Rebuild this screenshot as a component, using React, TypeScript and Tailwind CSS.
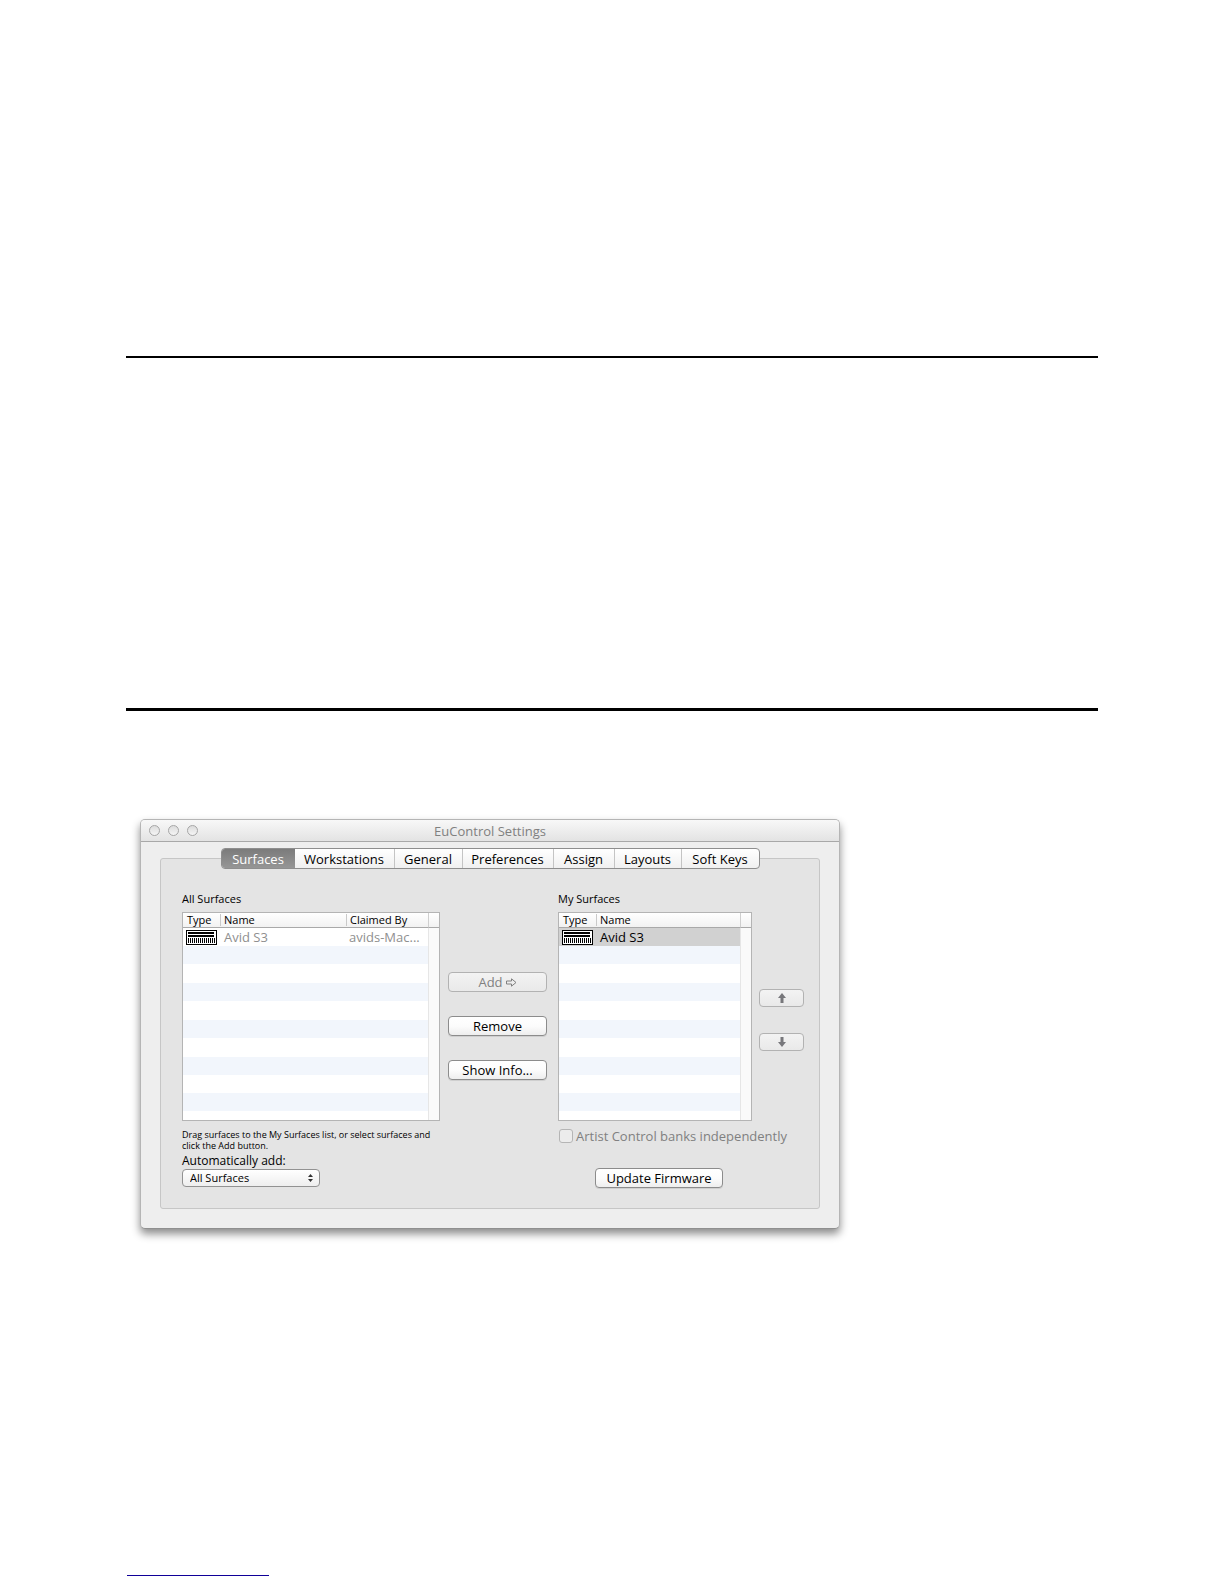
import { clsx } from "clsx";

const tabs = [
  { label: "Surfaces", width: "w-[73px]" },
  { label: "Workstations", width: "w-[99px]" },
  { label: "General", width: "w-[68px]" },
  { label: "Preferences", width: "w-[91px]" },
  { label: "Assign", width: "w-[61px]" },
  { label: "Layouts", width: "w-[67px]" },
  { label: "Soft Keys", width: "w-[78px]" },
];

const emptyRows = [1, 2, 3, 4, 5, 6, 7, 8, 9];

// Small console picture used in the Type column
function SurfaceIcon() {
  return (
    <svg width="31" height="15" viewBox="0 0 31 15" shapeRendering="crispEdges" className="block" aria-hidden="true">
      <rect width="31" height="15" fill="#000" />
      <rect x="1" y="1" width="29" height="13" fill="#fff" />
      <rect x="2" y="2" width="26" height="2" fill="#000" />
      <rect x="2" y="5" width="26" height="2" fill="#000" />
      <path d="M2.5 8v5M4.5 8v5M6.5 8v5M8.5 8v5M10.5 8v5M12.5 8v5M14.5 8v5M16.5 8v5M18.5 8v5M20.5 8v5M22.5 8v5M24.5 8v5M26.5 8v5M28.5 8v5" stroke="#000" />
    </svg>
  );
}

function ArrowIcon({ down = false }: { down?: boolean }) {
  return (
    <svg width="8" height="10" viewBox="0 0 8 10" className={clsx("block", down && "rotate-180")} aria-hidden="true">
      <path d="M4 0L8 5H5.5V10H2.5V5H0Z" fill="#77777b" />
    </svg>
  );
}

function PushButton({
  children,
  className,
  disabled = false,
  label,
}: {
  children: React.ReactNode;
  className?: string;
  disabled?: boolean;
  label?: string;
}) {
  return (
    <button
      type="button"
      disabled={disabled}
      aria-label={label}
      className={clsx(
        "flex items-center justify-center rounded border text-[13px] leading-4 whitespace-nowrap",
        disabled
          ? "border-[#b2b2b2] bg-linear-to-b from-[#f3f3f3] to-[#e9e9e9] text-[#808080]"
          : "border-[#8c8c8c] bg-linear-to-b from-white via-[#fcfcfc] to-[#eeeeee] text-black shadow-[0_1px_0_#cfcfcf]",
        className
      )}
    >
      {children}
    </button>
  );
}

function SurfaceTable({
  label,
  claimedBy,
  selected = false,
}: {
  label: string;
  claimedBy?: string;
  selected?: boolean;
}) {
  const th = "h-[15px] p-0 font-medium border-b border-[#a9a9a9]";
  const divider = "border-l border-[#c9c9c9] pl-[3px] leading-3";
  return (
    <table
      aria-label={label}
      className="w-full table-fixed border-separate border-spacing-0 border border-[#b4b4b4] bg-white text-left"
    >
      <colgroup>
        <col className="w-[37px]" />
        <col />
        {claimedBy && <col className="w-[82px]" />}
        <col className="w-[11px]" />
      </colgroup>
      <thead className="bg-linear-to-b from-white to-[#f1f1f1] text-[11px] leading-3">
        <tr>
          <th className={clsx(th, "pl-1")}>Type</th>
          <th className={th}>
            <div className={divider}>Name</div>
          </th>
          {claimedBy && (
            <th className={th}>
              <div className={divider}>Claimed By</div>
            </th>
          )}
          <td className={clsx(th, "border-l border-l-[#cfcfcf]")} />
        </tr>
      </thead>
      <tbody className="text-[13px] leading-[18px]">
        <tr className={selected ? "bg-[#d1d1d1] text-black" : "text-[#8f8f8f]"}>
          <td className="h-[18px] p-0 pl-[3px]">
            <SurfaceIcon />
          </td>
          <td className="p-0 pl-1">Avid S3</td>
          {claimedBy && <td className="p-0 pl-[3px] whitespace-nowrap">{claimedBy}</td>}
          <td className="border-l border-[#e6e6e6] bg-[#fafafa] p-0" />
        </tr>
        {emptyRows.map((row) => (
          <tr key={row} className={row % 2 ? "h-[18px] bg-[#f2f6fc]" : row === 8 ? "h-[18px]" : "h-[19px]"}>
            <td colSpan={claimedBy ? 3 : 2} className="p-0" />
            <td className="border-l border-[#e6e6e6] bg-[#fafafa] p-0" />
          </tr>
        ))}
        <tr className="h-[9px]">
          <td colSpan={claimedBy ? 3 : 2} className="p-0" />
          <td className="border-l border-[#e6e6e6] bg-[#fafafa] p-0" />
        </tr>
      </tbody>
    </table>
  );
}

function SettingsWindow() {
  return (
    <section className="ml-[14px] w-full max-w-[700px] rounded-[5px] border border-[#b5b5b5] border-b-[#8f8f8f] bg-[#eeeeee] pb-[19px] shadow-[0_5px_9px_rgba(0,0,0,0.45)]">
      {/* Title bar */}
      <header className="flex h-[22px] items-center rounded-t border-b border-[#a8a8a8] bg-linear-to-b from-[#f8f8f8] to-[#e3e3e3] px-2">
        <div className="flex flex-1 gap-2">
          {["Close", "Minimize", "Zoom"].map((name) => (
            <button
              key={name}
              type="button"
              aria-label={name}
              className="size-[11px] rounded-full border border-[#a6a6a6] bg-linear-to-b from-[#dcdcdc] to-[#f5f5f5]"
            />
          ))}
        </div>
        <h1 className="text-[13px] leading-4 text-[#808080]">EuControl Settings</h1>
        <div className="flex-1" />
      </header>

      {/* Tabs */}
      <div role="tablist" className="relative mt-[6px] flex justify-center">
        <div className="flex h-[21px] rounded border border-[#8e8e8e] bg-linear-to-b from-white to-[#f0f0f0]">
          {tabs.map((tab, i) => (
            <button
              key={tab.label}
              type="button"
              role="tab"
              aria-selected={i === 0}
              className={clsx(
                "text-center text-[13px] leading-[18px]",
                tab.width,
                i === 0
                  ? "rounded-l-[3px] bg-linear-to-b from-[#7b7b7b] to-[#969696] text-white"
                  : "text-black",
                i > 1 && "border-l border-[#c4c4c4]"
              )}
            >
              {tab.label}
            </button>
          ))}
        </div>
      </div>

      {/* Panel */}
      <div className="mx-[19px] -mt-[11px] flex rounded-[3px] border border-[#c6c6c6] bg-[#e4e4e4] pt-8 pr-[15px] pb-5 pl-[21px]">
        <div className="flex-1">
          <h2 className="mb-[5px] text-[11px] leading-4">All Surfaces</h2>
          <SurfaceTable label="All Surfaces" claimedBy="avids-Mac..." />
          <p className="mt-2 text-[9px] leading-[11px] whitespace-nowrap">
            Drag surfaces to the My Surfaces list, or select surfaces and
            <br />
            click the Add button.
          </p>
          <label htmlFor="auto-add" className="mt-[2px] block text-[12px] leading-4">
            Automatically add:
          </label>
          <div className="relative w-[138px]">
            <select
              id="auto-add"
              className="block h-[18px] w-full appearance-none rounded border border-[#929292] bg-linear-to-b from-white to-[#eeeeee] pl-[7px] text-[11px] leading-4"
            >
              <option>All Surfaces</option>
            </select>
            <svg width="5" height="8" viewBox="0 0 5 8" className="pointer-events-none absolute top-[5px] right-[7px]" aria-hidden="true">
              <path d="M2.5 0L5 3H0ZM2.5 8L0 5H5Z" fill="#333" />
            </svg>
          </div>
        </div>

        <div className="ml-2 w-[99px] pt-[81px]">
          <PushButton disabled className="h-5 w-full">
            Add
            <svg width="11" height="9" viewBox="0 0 11 9" className="ml-[3px]" aria-hidden="true">
              <path d="M0.5 3H5.5V0.8L10 4.5L5.5 8.2V6H0.5Z" fill="none" stroke="#808080" />
            </svg>
          </PushButton>
          <PushButton className="mt-6 h-5 w-full">Remove</PushButton>
          <PushButton className="mt-6 h-5 w-full">Show Info...</PushButton>
        </div>

        <div className="ml-[11px] w-[194px]">
          <h2 className="mb-[5px] text-[11px] leading-4">My Surfaces</h2>
          <SurfaceTable label="My Surfaces" selected />
          <label className="mt-[7px] flex items-center gap-[3px] pl-px text-[13px] leading-4 whitespace-nowrap text-[#808080]">
            <input
              type="checkbox"
              disabled
              className="size-[14px] shrink-0 appearance-none rounded-[3px] border border-[#b5b5b5] bg-[#ececec]"
            />
            Artist Control banks independently
          </label>
          <PushButton className="mt-6 ml-[37px] h-5 w-32">Update Firmware</PushButton>
        </div>

        <div className="ml-[7px] w-[45px] pt-[98px]">
          <PushButton disabled label="Move up" className="h-[18px] w-full">
            <ArrowIcon />
          </PushButton>
          <PushButton disabled label="Move down" className="mt-[26px] h-[18px] w-full">
            <ArrowIcon down />
          </PushButton>
        </div>
      </div>
    </section>
  );
}

export default function App() {
  return (
    <main className="min-h-screen bg-white px-[126px] pt-[356px] pb-2 font-['Open_Sans','Noto_Sans',sans-serif] font-medium text-black">
      <hr className="border-t-2 border-black" />
      <hr className="mt-[350px] border-t-3 border-black" />
      <div className="mt-[108px]">
        <SettingsWindow />
      </div>
      <hr className="mt-[346px] ml-px w-[142px] border-t border-[#100098]" />
    </main>
  );
}
